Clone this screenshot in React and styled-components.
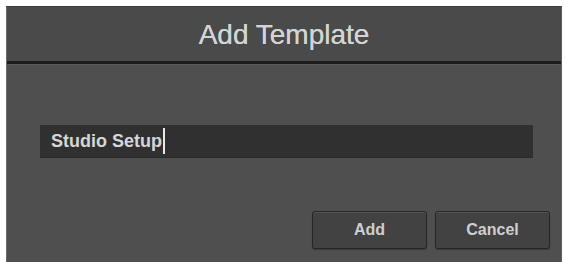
import React from 'react';
import styled, {createGlobalStyle} from 'styled-components';

const Global = createGlobalStyle`
    html, body {
        margin: 0;
        padding: 0;
        background: #ffffff;
    }
    body {
        font-family: "Liberation Sans", Arial, sans-serif;
    }
`;

const Page = styled.div`
    box-sizing: border-box;
    width: 565px;
    height: 262px;
    padding: 6px 3px 0 6px;
    background: #ffffff;
`;

const Dialog = styled.div`
    box-sizing: border-box;
    height: 100%;
    display: flex;
    flex-direction: column;
    background: #4f4f4f;
    border-left: 1px solid #6a6a6a;
    border-right: 1px solid #5c5c5c;
    border-top: 1px solid #3c3c3c;
`;

const Header = styled.div`
    box-sizing: border-box;
    height: 57px;
    display: flex;
    align-items: center;
    justify-content: center;
    padding-top: 1px;
    background: #4a4a4a;
    border-bottom: 3px solid #1c1c1c;
    color: #d4d4d4;
    font-size: 28px;
    text-shadow: 0 0 0.6px #d4d4d4;
`;

const Body = styled.div`
    flex: 1;
    display: flex;
    flex-direction: column;
    padding: 60px 28px 0 33px;
    border-top: 1px solid #5a5a5a;
`;

const Field = styled.div`
    height: 32px;
    display: flex;
    align-items: center;
    padding: 0 11px;
    background: #303030;
    border-bottom: 1px solid #2a2a2a;
    color: #d6d6d6;
    font-size: 18px;
    font-weight: bold;
`;

const Caret = styled.span`
    display: inline-block;
    width: 2px;
    height: 26px;
    margin-left: 1px;
    background: #e8e8e8;
`;

const Actions = styled.div`
    display: flex;
    justify-content: flex-end;
    gap: 8px;
    margin-top: 53px;
    margin-right: -17px;
`;

const Button = styled.button`
    box-sizing: border-box;
    width: 115px;
    height: 38px;
    background: #424242;
    border: 1px solid #262626;
    border-radius: 3px;
    box-shadow: inset 0 1px 0 #555555, 0 1px 1px #3a3a3a;
    color: #cfcfcf;
    font-family: "Liberation Sans", Arial, sans-serif;
    font-size: 16px;
    font-weight: bold;
    cursor: pointer;
`;

const App = () => {
    return (
        <Page>
            <Global />
            <Dialog>
                <Header>Add Template</Header>
                <Body>
                    <Field>
                        Studio Setup<Caret />
                    </Field>
                    <Actions>
                        <Button>Add</Button>
                        <Button>Cancel</Button>
                    </Actions>
                </Body>
            </Dialog>
        </Page>
    );
};

export default App;
